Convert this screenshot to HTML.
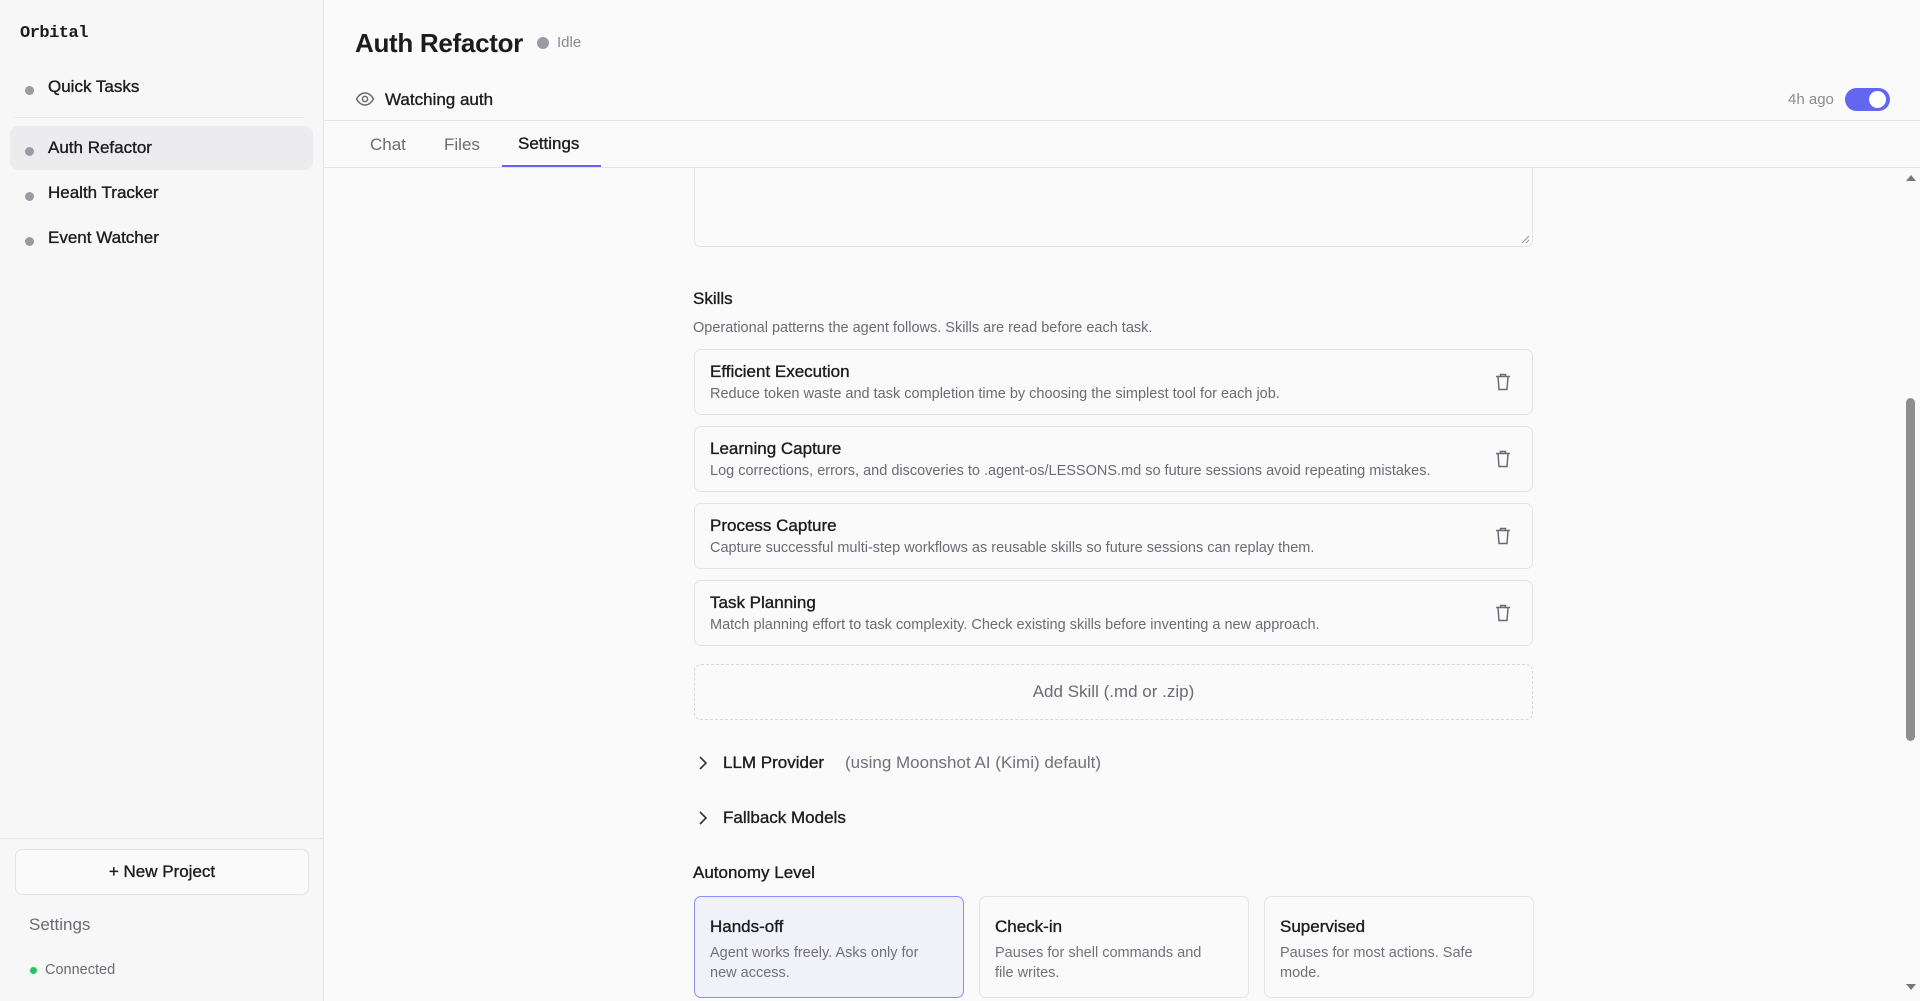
<!DOCTYPE html>
<html><head><meta charset="utf-8"><style>
*{box-sizing:border-box;margin:0;padding:0}
body{width:1920px;height:1001px;overflow:hidden;background:#fafafa;font-family:"Liberation Sans",sans-serif;color:#1c1c1f;position:relative}
.a{position:absolute;white-space:nowrap}
.m{-webkit-text-stroke:0.35px currentColor}
.side{position:absolute;left:0;top:0;width:324px;height:1001px;background:#f7f7f8;border-right:1px solid #e4e4e7}
.dot{position:absolute;width:9px;height:9px;border-radius:50%;background:#9a9aa2}
.card{position:absolute;left:694px;width:839px;height:66px;border:1px solid #e4e4e7;border-radius:7px;background:#fafafa}
.card .t{position:absolute;left:15px;top:12px;font-size:17px;color:#1c1c1f;-webkit-text-stroke:0.35px #1c1c1f}
.card .d{position:absolute;left:15px;top:36px;font-size:14.5px;color:#6b6b73}
.card svg{position:absolute;left:799px;top:22px}
.au{position:absolute;top:896px;height:102px;width:270px;border:1px solid #e4e4e7;border-radius:7px;background:#fafafa}
.au .t{position:absolute;left:15px;top:20px;font-size:17px;-webkit-text-stroke:0.35px #1c1c1f}
.au .d{position:absolute;left:15px;top:46px;font-size:14.5px;color:#71717a;line-height:20px;width:218px;white-space:normal}
</style></head><body>
<div class="side">
<div class="a" style="left:20px;top:24px;font-family:'Liberation Mono',monospace;font-weight:bold;font-size:17px;letter-spacing:-0.5px">Orbital</div>
<div class="dot" style="left:25px;top:86px"></div><div class="a m" style="left:48px;top:77px;font-size:17px">Quick Tasks</div>
<div class="a" style="left:15px;top:117px;width:289px;height:1px;background:#e4e4e7"></div>
<div class="a" style="left:10px;top:126px;width:303px;height:44px;border-radius:8px;background:#ececef"></div>
<div class="dot" style="left:25px;top:147px"></div><div class="a m" style="left:48px;top:138px;font-size:17px">Auth Refactor</div>
<div class="dot" style="left:25px;top:192px"></div><div class="a m" style="left:48px;top:183px;font-size:17px">Health Tracker</div>
<div class="dot" style="left:25px;top:237px"></div><div class="a m" style="left:48px;top:228px;font-size:17px">Event Watcher</div>
<div class="a" style="left:0;top:838px;width:324px;height:1px;background:#e4e4e7"></div>
<div class="a m" style="left:15px;top:849px;width:294px;height:46px;border:1px solid #e4e4e7;border-radius:7px;background:#fafafa;text-align:center;line-height:44px;font-size:17px">+ New Project</div>
<div class="a" style="left:29px;top:915px;font-size:17px;color:#6b6b73">Settings</div>
<div class="a" style="left:30px;top:967px;width:7px;height:7px;border-radius:50%;background:#22c55e"></div>
<div class="a" style="left:45px;top:962px;font-size:14.5px;color:#6b6b73">Connected</div>
</div>
<div class="a" style="left:355px;top:28px;font-size:26px;font-weight:bold;letter-spacing:-0.3px">Auth Refactor</div>
<div class="a" style="left:537px;top:37px;width:12px;height:12px;border-radius:50%;background:#9a9aa2"></div>
<div class="a" style="left:557px;top:34px;font-size:15px;color:#8a8a92">Idle</div>
<svg class="a" style="left:355px;top:91px" width="20" height="16" viewBox="0 0 20 16"><path d="M1.5 8C4 3.5 7 2 10 2s6 1.5 8.5 6C16 12.5 13 14 10 14s-6-1.5-8.5-6z" fill="none" stroke="#6b6b73" stroke-width="1.5"/><circle cx="10" cy="8" r="2.6" fill="none" stroke="#6b6b73" stroke-width="1.5"/></svg>
<div class="a m" style="left:385px;top:90px;font-size:17px">Watching auth</div>
<div class="a" style="left:1788px;top:91px;font-size:15px;color:#8a8a92">4h ago</div>
<div class="a" style="left:1845px;top:88px;width:45px;height:23px;border-radius:12px;background:#6366f1"><div class="a" style="left:24px;top:3px;width:17px;height:17px;border-radius:50%;background:#fff"></div></div>
<div class="a" style="left:324px;top:120px;width:1596px;height:1px;background:#e4e4e7"></div>
<div class="a" style="left:370px;top:135px;font-size:17px;color:#6b6b73">Chat</div>
<div class="a" style="left:444px;top:135px;font-size:17px;color:#6b6b73">Files</div>
<div class="a m" style="left:518px;top:134px;font-size:17px">Settings</div>
<div class="a" style="left:324px;top:167px;width:1596px;height:1px;background:#e4e4e7"></div>
<div class="a" style="left:502px;top:165px;width:99px;height:2px;background:#6366f1"></div>
<div class="a" style="left:694px;top:168px;width:839px;height:79px;border:1px solid #e4e4e7;border-top:none;border-radius:0 0 6px 6px;background:#fafafa"></div>
<svg class="a" style="left:1520px;top:234px" width="10" height="10"><path d="M9 2L2 9M9 6L6 9" stroke="#999" stroke-width="1"/></svg>
<div class="a m" style="left:693px;top:289px;font-size:17px">Skills</div>
<div class="a" style="left:693px;top:320px;font-size:14.5px;color:#6b6b73">Operational patterns the agent follows. Skills are read before each task.</div>
<div class="card" style="top:349px"><div class="t">Efficient Execution</div><div class="d">Reduce token waste and task completion time by choosing the simplest tool for each job.</div><svg width="18" height="20" viewBox="0 0 18 20"><path d="M2 4.5h14M6.5 4.5V2.5h5v2M4 4.5l1 13h8l1-13" fill="none" stroke="#6b6b73" stroke-width="1.5"/></svg></div>
<div class="card" style="top:426px"><div class="t">Learning Capture</div><div class="d">Log corrections, errors, and discoveries to .agent-os/LESSONS.md so future sessions avoid repeating mistakes.</div><svg width="18" height="20" viewBox="0 0 18 20"><path d="M2 4.5h14M6.5 4.5V2.5h5v2M4 4.5l1 13h8l1-13" fill="none" stroke="#6b6b73" stroke-width="1.5"/></svg></div>
<div class="card" style="top:503px"><div class="t">Process Capture</div><div class="d">Capture successful multi-step workflows as reusable skills so future sessions can replay them.</div><svg width="18" height="20" viewBox="0 0 18 20"><path d="M2 4.5h14M6.5 4.5V2.5h5v2M4 4.5l1 13h8l1-13" fill="none" stroke="#6b6b73" stroke-width="1.5"/></svg></div>
<div class="card" style="top:580px"><div class="t">Task Planning</div><div class="d">Match planning effort to task complexity. Check existing skills before inventing a new approach.</div><svg width="18" height="20" viewBox="0 0 18 20"><path d="M2 4.5h14M6.5 4.5V2.5h5v2M4 4.5l1 13h8l1-13" fill="none" stroke="#6b6b73" stroke-width="1.5"/></svg></div>
<div class="a" style="left:694px;top:664px;width:839px;height:56px;border:1px dashed #d8d8dc;border-radius:7px;text-align:center;line-height:54px;font-size:17px;color:#6b6b73">Add Skill (.md or .zip)</div>
<svg class="a" style="left:698px;top:755px" width="10" height="16"><path d="M2 2l6 6-6 6" fill="none" stroke="#333" stroke-width="1.6"/></svg>
<div class="a m" style="left:723px;top:753px;font-size:17px">LLM Provider</div>
<div class="a" style="left:845px;top:753px;font-size:17px;color:#71717a">(using Moonshot AI (Kimi) default)</div>
<svg class="a" style="left:698px;top:810px" width="10" height="16"><path d="M2 2l6 6-6 6" fill="none" stroke="#333" stroke-width="1.6"/></svg>
<div class="a m" style="left:723px;top:808px;font-size:17px">Fallback Models</div>
<div class="a m" style="left:693px;top:863px;font-size:17px">Autonomy Level</div>
<div class="au" style="left:694px;background:#f1f1f9;border-color:#8b8ff0"><div class="t">Hands-off</div><div class="d">Agent works freely. Asks only for new access.</div></div>
<div class="au" style="left:979px"><div class="t">Check-in</div><div class="d">Pauses for shell commands and file writes.</div></div>
<div class="au" style="left:1264px"><div class="t">Supervised</div><div class="d" style="width:200px">Pauses for most actions. Safe mode.</div></div>
<div class="a" style="left:1904px;top:168px;width:16px;height:833px;background:#fafafa"></div>
<svg class="a" style="left:1905px;top:174px" width="12" height="8"><path d="M1 7L6 1l5 6z" fill="#777"/></svg>
<svg class="a" style="left:1905px;top:983px" width="12" height="8"><path d="M1 1l5 6 5-6z" fill="#777"/></svg>
<div class="a" style="left:1906px;top:398px;width:9px;height:343px;border-radius:5px;background:#8e8e8e"></div>
</body></html>
